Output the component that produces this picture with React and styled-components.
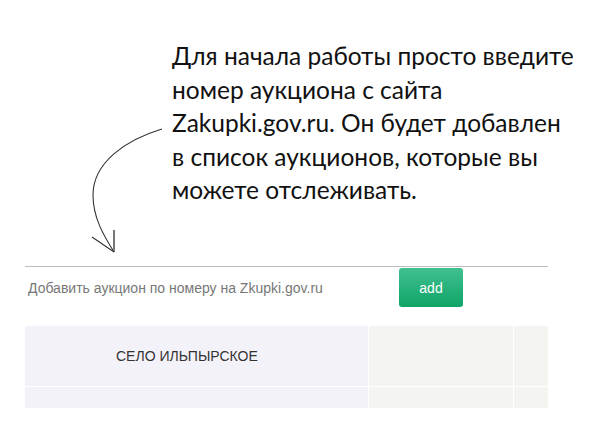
import React, { useState } from 'react'
import styled, { createGlobalStyle } from 'styled-components'

const GlobalStyle = createGlobalStyle`
  body {
    margin: 0;
    background: #ffffff;
    font-family: 'Liberation Sans', Arial, sans-serif;
  }
`

const Page = styled.div`
  width: 602px;
  padding: 0 54px 0 25px;
  box-sizing: border-box;
`

const Intro = styled.div`
  display: flex;
  height: 266px;
`

const ArrowBox = styled.div`
  width: 147px;
  flex-shrink: 0;
`

const Hint = styled.p`
  margin: 39px 0 0 0;
  font-family: 'Lato', 'Open Sans', sans-serif;
  font-size: 24.5px;
  line-height: 33.5px;
  white-space: nowrap;
  color: #111;
`

const SearchRow = styled.div`
  display: flex;
  align-items: flex-start;
  border-top: 1px solid #bdbdbd;
  padding-top: 1px;
`

const Input = styled.input`
  width: 374px;
  height: 39px;
  border: none;
  outline: none;
  padding: 0 0 0 3px;
  box-sizing: border-box;
  font-family: 'Liberation Sans', Arial, sans-serif;
  font-size: 14px;
  color: #333;
  background: transparent;
  &::placeholder {
    color: #777;
  }
`

const AddButton = styled.button`
  width: 64px;
  height: 39px;
  border: none;
  border-radius: 3px;
  background: linear-gradient(to bottom, #40c092 0%, #10a466 100%);
  color: #fff;
  font-family: 'Liberation Sans', Arial, sans-serif;
  font-size: 14px;
  cursor: pointer;
`

const Table = styled.div`
  display: grid;
  grid-template-columns: 343px 144px 34px;
  grid-template-rows: 60px 21px;
  gap: 1px;
  margin-top: 19px;
  width: 523px;
`

const Cell = styled.div`
  background: ${p => (p.$name ? '#f4f2f9' : '#f4f4f0')};
  display: flex;
  align-items: center;
  padding-left: ${p => (p.$name ? '91px' : '0')};
  font-size: 14px;
  color: #333;
`

const auctions = [
  { name: 'СЕЛО ИЛЬПЫРСКОЕ' },
  { name: '' },
]

// drawn in page coordinates, the box starts at x=25
const Arrow = () => (
  <svg width="147" height="266" viewBox="25 0 147 266">
    <path d="M162,129 C125,140 93,163 93,195 C93,218 104,236 114,252" fill="none" stroke="#333" strokeWidth="1.1" />
    <line x1="114" y1="230" x2="114" y2="252" stroke="#777" strokeWidth="2" />
    <line x1="92" y1="237" x2="114" y2="252" stroke="#333" strokeWidth="1.1" />
  </svg>
)

export default function App() {
  const [value, setValue] = useState('')

  return (
    <>
      <GlobalStyle />
      <Page>
        <Intro>
          <ArrowBox>
            <Arrow />
          </ArrowBox>
          <Hint>
            Для начала работы просто введите<br />
            номер аукциона с сайта<br />
            Zakupki.gov.ru. Он будет добавлен<br />
            в список аукционов, которые вы<br />
            можете отслеживать.
          </Hint>
        </Intro>
        <SearchRow>
          <Input
            value={value}
            onChange={e => setValue(e.target.value)}
            placeholder="Добавить аукцион по номеру на Zkupki.gov.ru"
          />
          <AddButton>add</AddButton>
        </SearchRow>
        <Table>
          {auctions.map((a, i) => (
            <React.Fragment key={i}>
              <Cell $name>{a.name}</Cell>
              <Cell />
              <Cell />
            </React.Fragment>
          ))}
        </Table>
      </Page>
    </>
  )
}
